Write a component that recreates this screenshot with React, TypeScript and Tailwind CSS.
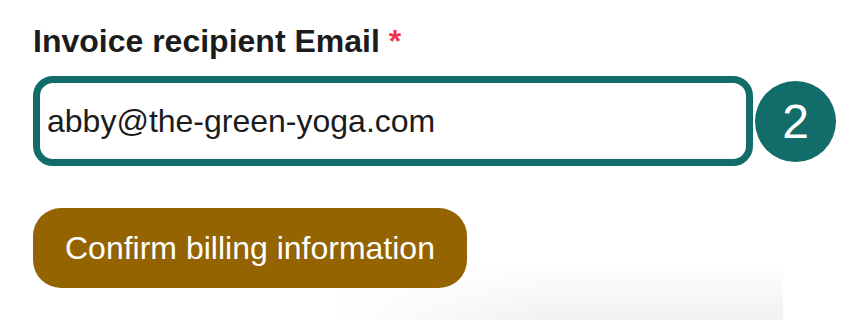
export default function App() {
  return (
    <div className="relative h-[320px] w-[842px] overflow-hidden bg-white font-['Liberation_Sans',Arial,sans-serif]">
      {/* faint shadow of the card below */}
      <div className="pointer-events-none absolute left-[330px] top-[262px] h-[58px] w-[453px] bg-[linear-gradient(to_bottom,rgba(255,255,255,0),#f1f1f1)] [mask-image:linear-gradient(to_right,transparent,black_50%)]" />

      <div className="relative pl-[33px] pt-[23px]">
        <label className="block text-[32px] font-bold leading-[37px] text-[#1c1c1c]">
          Invoice recipient Email <span className="text-[#f0344f]">*</span>
        </label>

        <div className="mt-[16px] flex items-center gap-[2px]">
          <input
            type="email"
            defaultValue="abby@the-green-yoga.com"
            className="h-[90px] w-[720px] shrink-0 rounded-[20px] border-[7px] border-[#126c6a] bg-white px-[7px] text-[32px] text-[#1c1c1c] outline-none"
          />
          <div className="flex h-[81px] w-[81px] shrink-0 items-center justify-center rounded-full bg-[#126c6a] pt-[2px] text-[48px] leading-none text-white">
            2
          </div>
        </div>

        <button className="mt-[42px] h-[80px] rounded-[28px] bg-[#956402] px-[32px] text-[32px] text-white">
          Confirm billing information
        </button>
      </div>
    </div>
  );
}
